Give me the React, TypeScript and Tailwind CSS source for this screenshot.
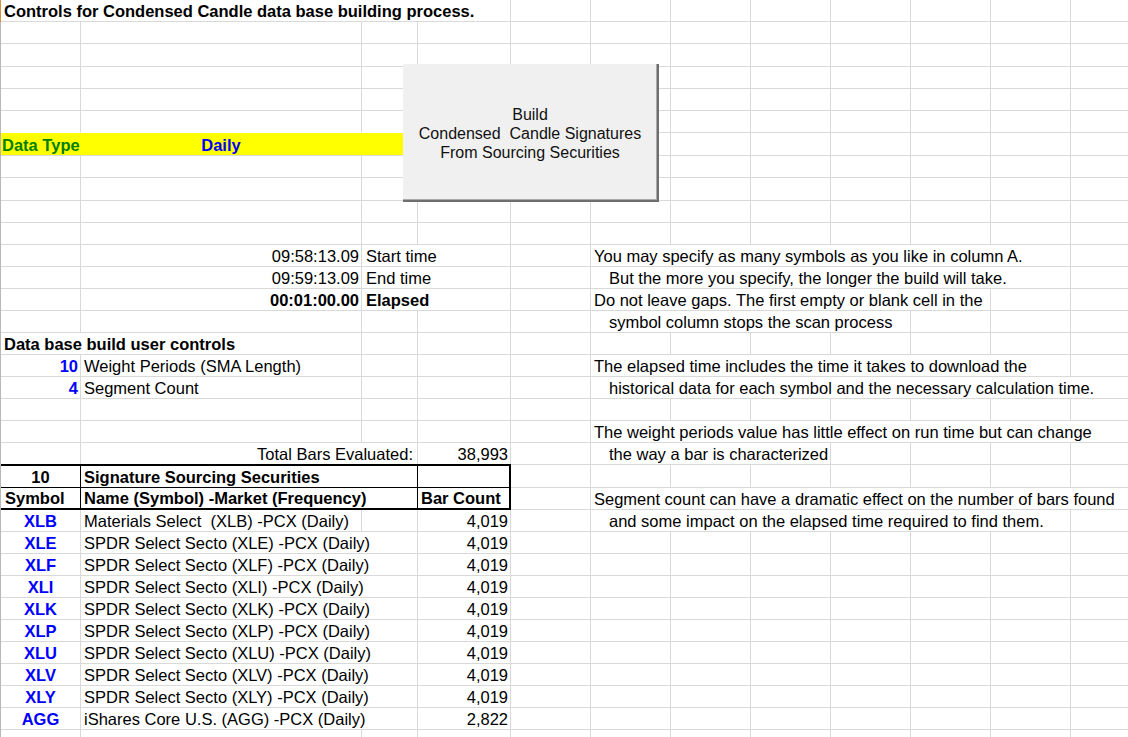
import type { ReactNode } from "react";
import { twMerge } from "tailwind-merge";

// Excel-like sheet: fixed column widths, rows ~22px
const GRID =
  "grid grid-cols-[80px_281px_56px_93px_80px_80px_80px_80px_80px_80px_80px_80px]";

const SPAN: Record<number, string> = {
  1: "col-span-1",
  2: "col-span-2",
  3: "col-span-3",
  4: "col-span-4",
  5: "col-span-5",
  6: "col-span-6",
  7: "col-span-7",
};

type Spec = {
  span?: number;
  text?: ReactNode;
  align?: "l" | "r" | "c";
  cls?: string;
};

const IND = "pl-[18px]";
const SYM = "text-[#0000ff] font-bold";
const HDR_TOP = "border-t-2 border-t-black border-b-black border-r-black";
const HDR_BOT = "border-b-2 border-b-black border-r-black";

function Row({ h, cells = [], edge }: { h: string; cells?: Spec[]; edge?: string }) {
  const used = cells.reduce((n, c) => n + (c.span ?? 1), 0);
  const all: Spec[] = [...cells, ...Array.from({ length: Math.max(0, 12 - used) }, () => ({}))];
  return (
    <div className={twMerge(GRID, h, "border-l border-l-[#b8b8b8]", edge)}>
      {all.map((c, i) => (
        <div
          key={i}
          className={twMerge(
            "flex items-center pt-[2px] whitespace-pre border-r border-b border-r-[#d9d9d9] border-b-[#d9d9d9]",
            SPAN[c.span ?? 1],
            c.align === "r" ? "justify-end pr-[2px]" : c.align === "c" ? "justify-center" : "pl-[3px]",
            c.cls
          )}
        >
          {c.text}
        </div>
      ))}
    </div>
  );
}

const securities = [
  { sym: "XLB", name: "Materials Select  (XLB) -PCX (Daily)", count: "4,019" },
  { sym: "XLE", name: "SPDR Select Secto (XLE) -PCX (Daily)", count: "4,019" },
  { sym: "XLF", name: "SPDR Select Secto (XLF) -PCX (Daily)", count: "4,019" },
  { sym: "XLI", name: "SPDR Select Secto (XLI) -PCX (Daily)", count: "4,019" },
  { sym: "XLK", name: "SPDR Select Secto (XLK) -PCX (Daily)", count: "4,019" },
  { sym: "XLP", name: "SPDR Select Secto (XLP) -PCX (Daily)", count: "4,019" },
  { sym: "XLU", name: "SPDR Select Secto (XLU) -PCX (Daily)", count: "4,019" },
  { sym: "XLV", name: "SPDR Select Secto (XLV) -PCX (Daily)", count: "4,019" },
  { sym: "XLY", name: "SPDR Select Secto (XLY) -PCX (Daily)", count: "4,019" },
  { sym: "AGG", name: "iShares Core U.S. (AGG) -PCX (Daily)", count: "2,822" },
];

const E: Spec = {};

export default function App() {
  return (
    <div className="relative w-[1128px] h-[737px] overflow-hidden bg-white text-black font-['Liberation_Sans',Arial,sans-serif] text-[16.5px] leading-[19px]">
      {/* title */}
      <Row
        h="h-[22px]"
        edge="border-l-[#d6913c]"
        cells={[{ span: 4, text: "Controls for Condensed Candle data base building process.", cls: "font-bold" }]}
      />
      <Row h="h-[22px]" />
      <Row h="h-[23px]" />
      <Row h="h-[22px]" />
      <Row h="h-[22px]" />
      <Row h="h-[22px]" cells={[{ cls: "border-b-white" }, { cls: "border-b-white" }, { cls: "border-b-white" }]} />

      {/* Data type */}
      <Row
        h="h-[23px]"
        cells={[
          { text: "Data Type", cls: "bg-[#ffff00] border-r-[#ffff00] text-[#008000] font-bold pl-[1px]" },
          { text: "Daily", align: "c", cls: "bg-[#ffff00] border-r-[#ffff00] text-[#0000ff] font-bold" },
          { cls: "bg-[#ffff00]" },
        ]}
      />
      <Row h="h-[22px]" />
      <Row h="h-[23px]" />
      <Row h="h-[22px]" />
      <Row h="h-[22px]" />

      {/* timing */}
      <Row
        h="h-[22px]"
        cells={[
          E,
          { text: "09:58:13.09", align: "r" },
          { span: 2, text: "Start time", cls: "pl-[4px]" },
          E,
          { span: 6, text: "You may specify as many symbols as you like in column A." },
        ]}
      />
      <Row
        h="h-[22px]"
        cells={[
          E,
          { text: "09:59:13.09", align: "r" },
          { span: 2, text: "End time", cls: "pl-[4px]" },
          E,
          { span: 6, text: "But the more you specify, the longer the build will take.", cls: IND },
        ]}
      />
      <Row
        h="h-[22px]"
        cells={[
          E,
          { text: "00:01:00.00", align: "r", cls: "font-bold" },
          { span: 2, text: "Elapsed", cls: "pl-[4px] font-bold" },
          E,
          { span: 5, text: "Do not leave gaps. The first empty or blank cell in the" },
        ]}
      />
      <Row
        h="h-[22px]"
        cells={[E, E, E, E, E, { span: 4, text: "symbol column stops the scan process", cls: IND }]}
      />

      {/* user controls */}
      <Row h="h-[22px]" cells={[{ span: 2, text: "Data base build user controls", cls: "font-bold" }]} />
      <Row
        h="h-[22px]"
        cells={[
          { text: "10", align: "r", cls: SYM },
          { text: "Weight Periods (SMA Length)" },
          E,
          E,
          E,
          { span: 6, text: "The elapsed time includes the time it takes to download the" },
        ]}
      />
      <Row
        h="h-[22px]"
        cells={[
          { text: "4", align: "r", cls: SYM },
          { text: "Segment Count" },
          E,
          E,
          E,
          { span: 7, text: "historical data for each symbol and the necessary calculation time.", cls: IND },
        ]}
      />
      <Row h="h-[22px]" />
      <Row
        h="h-[22px]"
        cells={[E, E, E, E, E, { span: 7, text: "The weight periods value has little effect on run time but can change" }]}
      />
      <Row
        h="h-[21px]"
        cells={[
          E,
          { span: 2, text: "Total Bars Evaluated:", align: "r", cls: "pr-[4px]" },
          { text: "38,993", align: "r" },
          E,
          { span: 3, text: "the way a bar is characterized", cls: IND },
        ]}
      />

      {/* securities table */}
      <Row
        h="h-[23px]"
        cells={[
          { text: "10", align: "c", cls: `${HDR_TOP} font-bold` },
          { span: 2, text: "Signature Sourcing Securities", cls: `${HDR_TOP} font-bold` },
          { cls: `${HDR_TOP} border-r-2` },
        ]}
      />
      <Row
        h="h-[23px]"
        cells={[
          { text: "Symbol", cls: `${HDR_BOT} font-bold pl-[4px]` },
          { span: 2, text: "Name (Symbol) -Market (Frequency)", cls: `${HDR_BOT} font-bold` },
          { text: "Bar Count", cls: `${HDR_BOT} border-r-2 font-bold` },
          E,
          { span: 7, text: "Segment count can have a dramatic effect on the number of bars found" },
        ]}
      />
      {securities.map((s, i) => (
        <Row
          key={s.sym}
          h={i === 0 ? "h-[21px]" : i === 1 ? "h-[23px]" : "h-[22px]"}
          cells={
            i === 0
              ? [
                  { text: s.sym, align: "c", cls: SYM },
                  { text: s.name },
                  E,
                  { text: s.count, align: "r" },
                  E,
                  { span: 6, text: "and some impact on the elapsed time required to find them.", cls: IND },
                ]
              : [{ text: s.sym, align: "c", cls: SYM }, { span: 2, text: s.name }, { text: s.count, align: "r" }]
          }
        />
      ))}
      <Row h="h-[22px]" />

      {/* form button over the cells */}
      <button className="absolute left-[403px] top-[64px] w-[256px] h-[138px] flex flex-col items-center justify-center pt-[2px] bg-[#f0f0f0] border-r-2 border-b-2 border-[#6e6e6e] shadow-[inset_-1px_-1px_0_#a9a9a9] text-[16px] leading-[19px] text-[#111] whitespace-pre">
        <span>Build</span>
        <span>Condensed  Candle Signatures</span>
        <span>From Sourcing Securities</span>
      </button>
    </div>
  );
}
